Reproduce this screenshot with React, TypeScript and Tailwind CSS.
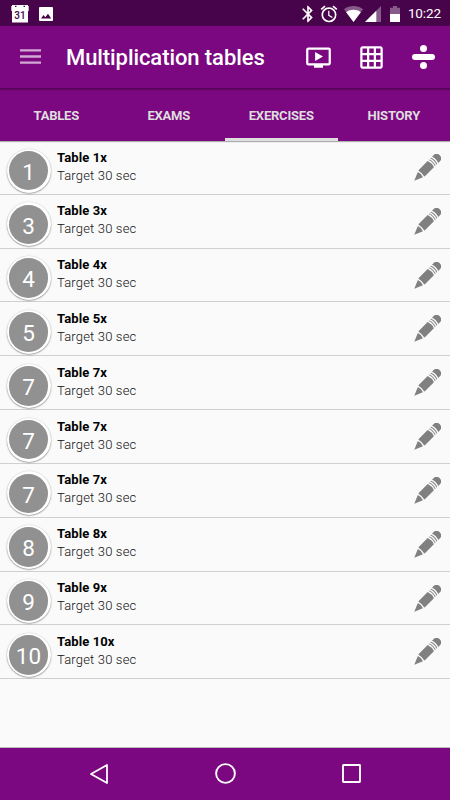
import { MdAlarm, MdBluetooth, MdGridOn, MdOndemandVideo } from 'react-icons/md';

type Exercise = {
  id: number;
  table: number;
  target: number;
};

const exercises: Exercise[] = [1, 3, 4, 5, 7, 7, 7, 8, 9, 10].map((table, id) => ({
  id,
  table,
  target: 30,
}));

const tabs = ['TABLES', 'EXAMS', 'EXERCISES', 'HISTORY'];

function StatusBar() {
  return (
    <div className="flex h-[26px] shrink-0 items-center bg-[#48044b] pt-px pr-[9px] pl-[11px] text-white">
      <svg className="h-[18px] w-[18px]" viewBox="0 0 18 18">
        <path d="M1 0h16v17.5H1z M0.3 1h17.4v5H.3z" fill="#fff" />
        <path d="M4 .8h1.5v1.2H4z M12.5.8H14v1.2h-1.5z" fill="#48044b" />
        <text x="9" y="13.8" textAnchor="middle" fontFamily="Roboto" fontSize="10" fontWeight="500" fill="#48044b">31</text>
      </svg>
      <svg className="ml-[10px] h-[14px] w-[14px]" viewBox="0 0 14 14">
        <rect width="14" height="14" rx="1" fill="#fff" />
        <path d="M2 11.5 4.5 8l1.8 2.2L9 6.8l3.2 4.7z" fill="#48044b" />
      </svg>
      <MdBluetooth className="ml-[245px] h-5 w-5" />
      <MdAlarm className="ml-[1px] h-5 w-5" />
      <svg className="ml-[5px] h-4 w-[19px]" viewBox="0 0 19 16">
        <path d="M9.5 16 0 3.2C5.6-1 13.4-1 19 3.2z" fill="#fff" opacity=".35" />
        <path d="M9.5 16 2.2 6.2c4.3-3.2 10.3-3.2 14.6 0z" fill="#fff" />
      </svg>
      <svg className="ml-[2px] h-4 w-4" viewBox="0 0 16 16">
        <path d="M16 0v16H0z" fill="#fff" opacity=".35" />
        <path d="M11.3 4.7V16H0z" fill="#fff" />
      </svg>
      <svg className="ml-[9px] h-4 w-[10px]" viewBox="0 0 10 16">
        <path d="M3 0h4v1.7h3V8H0V1.7h3z" fill="#fff" opacity=".35" />
        <path d="M0 8h10v8H0z" fill="#fff" />
      </svg>
      <span className="ml-auto text-[13.5px] leading-none tracking-[-0.1px]">10:22</span>
    </div>
  );
}

function Toolbar() {
  return (
    <div className="flex h-[62px] shrink-0 items-center pr-[15px] pl-5 text-white">
      <svg className="mb-px h-[15px] w-[21px] opacity-65" viewBox="0 0 21 15">
        <path d="M0 1.3h21M0 7.5h21M0 13.7h21" stroke="#fff" strokeWidth="2.3" />
      </svg>
      <h1 className="mt-[2px] ml-[25px] text-[22px] leading-none font-medium tracking-[-0.08px] whitespace-nowrap">Multiplication tables</h1>
      <div className="ml-auto flex items-center">
        <MdOndemandVideo className="h-[27px] w-[27px]" />
        <MdGridOn className="ml-[26px] h-[27px] w-[27px]" />
        <svg className="ml-[27px] h-6 w-[23px]" viewBox="0 0 23 24">
          <circle cx="11.5" cy="3.5" r="3.5" fill="#fff" />
          <rect y="9" width="23" height="6" rx="3" fill="#fff" />
          <circle cx="11.5" cy="20.5" r="3.5" fill="#fff" />
        </svg>
      </div>
    </div>
  );
}

function Pencil() {
  return (
    <svg className="h-[27px] w-[27px]" viewBox="0 0 27 27">
      <g transform="translate(.3 26.7) rotate(-45)" fill="#808080">
        <path d="M0 0 8.6-3.6Q10 0 8.6 3.6z" />
        <path d="M10-4.1 11-4.4H23.3Q25 0 23.3 4.4H11L10 4.1Q11.2 0 10-4.1z" />
        <path d="M24.7-4.4h1q1.8 4.4 0 8.8h-1q1.8-4.4 0-8.8z" />
        <path d="M27.1-4.4h1q1.8 4.4 0 8.8h-1q1.8-4.4 0-8.8z" />
        <path d="M29.5-4.4H32.5Q36-3.8 36 0T32.5 4.4H29.5q1.8-4.4 0-8.8z" />
      </g>
    </svg>
  );
}

function ExerciseRow({ exercise }: { exercise: Exercise }) {
  return (
    <li className="flex h-[53.82px] border-b border-[#d0d0d0] pr-[9px] pl-[6.5px]">
      <div className="mt-[7.5px] flex h-11 w-11 shrink-0 items-center justify-center rounded-full bg-white shadow-[0_0.5px_1.5px_rgba(0,0,0,0.55)]">
        <div className="flex h-[39.5px] w-[39.5px] items-center justify-center rounded-full bg-[#919191] pt-[3px] text-[22.5px] leading-none text-white">
          {exercise.table}
        </div>
      </div>
      <div className="ml-[6.5px] pt-[7.5px]">
        <p className="text-[13px] leading-[18px] font-bold tracking-[0.1px] text-black">Table {exercise.table}x</p>
        <p className="text-[13px] leading-[18px] font-light tracking-[0.17px] text-[#111]">Target {exercise.target} sec</p>
      </div>
      <div className="mt-[13px] ml-auto">
        <Pencil />
      </div>
    </li>
  );
}

function NavigationBar() {
  return (
    <nav className="flex h-[53px] shrink-0 items-center justify-between border-t border-[#bbb] bg-[#7b0880] pr-[89px] pb-px pl-[90px]">
      <svg className="h-5 w-[18px]" viewBox="0 0 18 20">
        <path d="M1 10 17 1v18z" fill="none" stroke="#fff" strokeWidth="1.8" strokeLinejoin="round" />
      </svg>
      <svg className="h-[21px] w-[21px]" viewBox="0 0 21 21">
        <circle cx="10.5" cy="10.5" r="9.4" fill="none" stroke="#fff" strokeWidth="1.9" />
      </svg>
      <svg className="h-[19px] w-[19px]" viewBox="0 0 19 19">
        <rect x="1" y="1" width="17" height="17" rx=".5" fill="none" stroke="#fff" strokeWidth="1.9" />
      </svg>
    </nav>
  );
}

export default function App() {
  return (
    <div className="flex h-[800px] w-[450px] flex-col overflow-hidden bg-[#fafafa] font-['Roboto',sans-serif]">
      <StatusBar />
      <header className="shrink-0 bg-[#7b0880] shadow-[0_1px_1px_rgba(0,0,0,0.3)]">
        <Toolbar />
        <div className="h-[3px] bg-linear-to-b from-[#4d0550] to-[#7b0880]" />
        <div className="flex h-[50px]">
          {tabs.map((tab) => (
            <button
              key={tab}
              className={`flex flex-1 items-center justify-center border-b-3 pt-[2px] text-[13px] font-bold tracking-[-0.2px] text-[#dedede] ${tab === 'EXERCISES' ? 'border-[#dedede]' : 'border-transparent'}`}
            >
              {tab}
            </button>
          ))}
        </div>
      </header>
      <ul className="flex-1">
        {exercises.map((exercise) => (
          <ExerciseRow key={exercise.id} exercise={exercise} />
        ))}
      </ul>
      <NavigationBar />
    </div>
  );
}
